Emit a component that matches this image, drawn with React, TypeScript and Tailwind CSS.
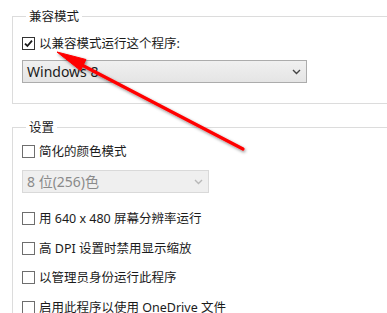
const FONT = { fontFamily: '"Noto Sans", "Noto Sans CJK SC", sans-serif' }

function CheckBox({ checked }: { checked?: boolean }) {
  return (
    <span
      className={`w-[13px] h-[13px] shrink-0 border bg-white flex items-center justify-center ${
        checked ? 'border-[#333333]' : 'border-[#6e6e6e]'
      }`}
    >
      {checked && (
        <svg width="9" height="9" viewBox="0 0 9 9">
          <path d="M1 4.6 L3.4 7 L8 1.6" fill="none" stroke="#1a1a1a" strokeWidth="1.8" />
        </svg>
      )}
    </span>
  )
}

function Row({ label, checked, className = '' }: { label: string; checked?: boolean; className?: string }) {
  return (
    <div className={`flex items-center gap-[4px] h-[17px] ${className}`}>
      <CheckBox checked={checked} />
      <span className="text-[12.5px] leading-[17px] text-[#1b1b1b] whitespace-nowrap">{label}</span>
    </div>
  )
}

function Chevron({ color }: { color: string }) {
  return (
    <svg width="9" height="6" viewBox="0 0 9 6">
      <path d="M1 1 L4.5 4.5 L8 1" fill="none" stroke={color} strokeWidth="1.4" />
    </svg>
  )
}

export default function App() {
  return (
    <div className="relative w-[387px] h-[313px] overflow-hidden bg-white" style={FONT}>
      <div className="w-[440px] pt-[8px]">
        <fieldset className="ml-[12px] border border-r-0 border-[#dcdcdc] pl-[9px] pb-[20px]">
          <legend className="ml-[4px] px-[3px] text-[12.5px] leading-[17px] text-[#1b1b1b]">兼容模式</legend>
          <Row label="以兼容模式运行这个程序:" checked className="mt-[10px]" />
          <div className="mt-[8px] w-[285px] h-[23px] border border-[#acacac] bg-gradient-to-b from-[#f0f0f0] to-[#e5e5e5] flex items-center justify-between pl-[4px] pr-[5px]">
            <span className="text-[14px] text-[#1b1b1b]">Windows 8</span>
            <Chevron color="#444444" />
          </div>
        </fieldset>

        <fieldset className="mt-[15px] ml-[12px] h-[300px] border border-r-0 border-[#dcdcdc] pl-[9px]">
          <legend className="ml-[4px] px-[3px] text-[12.5px] leading-[17px] text-[#1b1b1b]">设置</legend>
          <Row label="简化的颜色模式" className="mt-[7px]" />
          <div className="mt-[10px] w-[187px] h-[23px] border border-[#d9d9d9] bg-[#efefef] flex items-center justify-between pl-[4px] pr-[5px]">
            <span className="text-[14px] text-[#8a8a8a]">8 位(256)色</span>
            <Chevron color="#b8b8b8" />
          </div>
          <div className="mt-[17px] flex flex-col gap-[12.5px]">
            <Row label="用 640 x 480 屏幕分辨率运行" />
            <Row label="高 DPI 设置时禁用显示缩放" />
            <Row label="以管理员身份运行此程序" />
            <Row label="启用此程序以使用 OneDrive 文件" />
          </div>
        </fieldset>
      </div>

      {/* red arrow */}
      <svg className="absolute left-0 top-0 pointer-events-none" width="387" height="313">
        <defs>
          <filter id="sh" x="-20%" y="-20%" width="140%" height="140%">
            <feDropShadow dx="1" dy="1.5" stdDeviation="1.5" floodColor="#000" floodOpacity="0.45" />
          </filter>
        </defs>
        <g filter="url(#sh)" fill="#ff0000" stroke="#ff0000">
          <line x1="243" y1="149" x2="78" y2="63" strokeWidth="3.2" strokeLinecap="round" />
          <polygon points="57,52 86,59.5 80.5,70.5" strokeWidth="1" strokeLinejoin="round" />
        </g>
      </svg>
    </div>
  )
}
